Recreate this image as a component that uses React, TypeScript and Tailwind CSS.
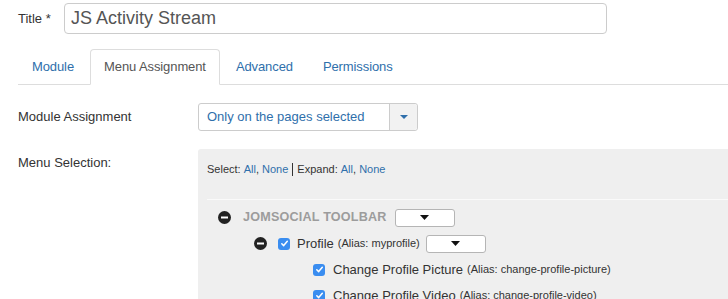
import React from "react";

function Minus() {
  return (
    <svg width="13" height="13" viewBox="0 0 13 13" className="shrink-0">
      <circle cx="6.5" cy="6.5" r="6.5" fill="#222" />
      <rect x="3" y="5.5" width="7" height="2" fill="#fff" />
    </svg>
  );
}

function Check() {
  return (
    <span className="w-[12px] h-[12px] rounded-[3px] bg-[#3a8df0] flex items-center justify-center shrink-0">
      <svg width="9" height="9" viewBox="0 0 9 9">
        <path d="M1.8 4.7 L3.7 6.6 L7.3 2.3" stroke="#fff" strokeWidth="1.5" fill="none" strokeLinecap="round" strokeLinejoin="round" />
      </svg>
    </span>
  );
}

function MiniSelect({ w }: { w: string }) {
  return (
    <span className={`${w} h-[18px] border border-[#b5b5b5] rounded-[3px] bg-white flex items-center justify-center shrink-0`}>
      <svg width="9" height="5" viewBox="0 0 9 5">
        <path d="M0 0 L9 0 L4.5 5 Z" fill="#111" />
      </svg>
    </span>
  );
}

export default function App() {
  return (
    <div className="w-[728px] h-[299px] overflow-hidden bg-white text-[#333] font-['Liberation_Sans',Arial,sans-serif]">
      {/* Title row */}
      <div className="flex items-center pt-[3px]">
        <div className="w-[64px] pl-[18px] text-[13px]">Title *</div>
        <div className="w-[543px] h-[31px] border border-[#ccc] rounded-[4px] flex items-center px-[6px] text-[18px] text-[#555]">
          JS Activity Stream
        </div>
      </div>

      {/* Tabs */}
      <div className="mt-[15px] ml-[18px] flex border-b border-[#ddd] h-[36px]">
        <div className="px-[13px] h-[35px] flex items-center text-[13px] tracking-[-0.1px] text-[#2f6fab] mr-[2px] border border-transparent">Module</div>
        <div className="px-[13px] h-[36px] flex items-center text-[13px] tracking-[-0.1px] text-[#555] mr-[2px] bg-white border border-[#ddd] border-b-white rounded-t-[4px]">Menu Assignment</div>
        <div className="px-[13px] h-[35px] flex items-center text-[13px] tracking-[-0.1px] text-[#2f6fab] mr-[2px] border border-transparent">Advanced</div>
        <div className="px-[13px] h-[35px] flex items-center text-[13px] tracking-[-0.1px] text-[#2f6fab] mr-[2px] border border-transparent">Permissions</div>
      </div>

      {/* Module assignment */}
      <div className="flex items-center mt-[18px]">
        <div className="w-[198px] pl-[18px] text-[13px]">Module Assignment</div>
        <div className="w-[220px] h-[28px] border border-[#ccc] rounded-[3px] flex">
          <div className="flex-1 flex items-center pl-[8px] text-[13px] text-[#2f6fab]">Only on the pages selected</div>
          <div className="w-[28px] border-l border-[#ccc] bg-[#f2f2f2] flex items-center justify-center rounded-r-[3px]">
            <svg width="8" height="4" viewBox="0 0 8 4">
              <path d="M0 0 L8 0 L4 4 Z" fill="#2f6fab" />
            </svg>
          </div>
        </div>
      </div>

      {/* Menu selection */}
      <div className="flex mt-[18px]">
        <div className="w-[198px] pl-[18px] pt-[4px] text-[13px]">Menu Selection:</div>
        <div className="flex-1 bg-[#efefef] h-[200px] rounded-tl-[3px]">
          <div className="pl-[9px] pt-[12px] text-[11px] text-[#333] flex items-center">
            <span>Select:&nbsp;</span>
            <span className="text-[#2f6fab]">All</span>
            <span>,&nbsp;</span>
            <span className="text-[#2f6fab]">None</span>
            <span className="mx-[4px] w-px h-[13px] bg-[#333]"></span>
            <span>Expand:&nbsp;</span>
            <span className="text-[#2f6fab]">All</span>
            <span>,&nbsp;</span>
            <span className="text-[#2f6fab]">None</span>
          </div>
          <div className="ml-[9px] mt-[21px] border-t border-[#fafafa]"></div>
          <div className="pl-[20px] pt-[9px]">
            <div className="flex items-center h-[18px]">
              <Minus />
              <span className="ml-[12px] text-[12.6px] font-bold text-[#9c9c9c] tracking-[0.2px]">JOMSOCIAL TOOLBAR</span>
              <span className="ml-[8px]"><MiniSelect w="w-[60px]" /></span>
            </div>
            <div className="flex items-center h-[18px] mt-[8px] pl-[36px]">
              <Minus />
              <span className="ml-[11px]"><Check /></span>
              <span className="ml-[7px] text-[13px] text-[#333]">Profile</span>
              <span className="ml-[4px] text-[11px] text-[#333]">(Alias: myprofile)</span>
              <span className="ml-[6px]"><MiniSelect w="w-[60px]" /></span>
            </div>
            <div className="flex items-center h-[18px] mt-[8px] pl-[95px]">
              <Check />
              <span className="ml-[8px] text-[13px] text-[#333]">Change Profile Picture</span>
              <span className="ml-[4px] text-[11px] text-[#333]">(Alias: change-profile-picture)</span>
            </div>
            <div className="flex items-center h-[18px] mt-[8px] pl-[95px]">
              <Check />
              <span className="ml-[8px] text-[13px] text-[#333]">Change Profile Video</span>
              <span className="ml-[4px] text-[11px] text-[#333]">(Alias: change-profile-video)</span>
            </div>
          </div>
        </div>
      </div>
    </div>
  );
}
